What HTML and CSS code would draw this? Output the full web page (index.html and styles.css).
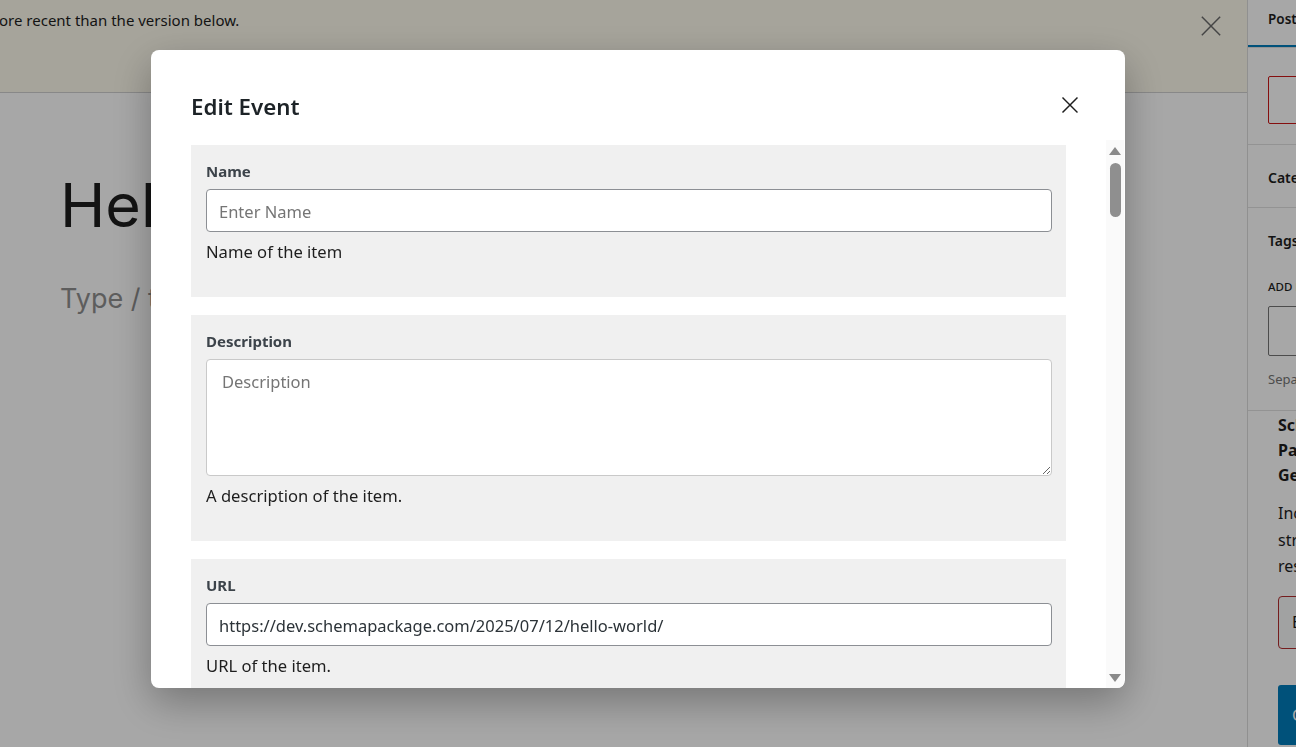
FILE: index.html
```html
<!DOCTYPE html>
<html>
<head>
	<meta charset="utf-8">
	<link rel="stylesheet" href="styles.css">
</head>
<body>
	<div class="editor">
		<div class="main">
			<div class="notice">
				<p class="notice-text">ore recent than the version below.</p>
				<svg class="notice-close" width="24" height="24" viewBox="0 0 24 24"><path d="M2 2 L22 22 M22 2 L2 22" stroke="currentColor" stroke-width="1.6" fill="none"/></svg>
			</div>
			<div class="canvas">
				<h1 class="post-title">Hello world!</h1>
				<p class="appender">Type / to choose a block</p>
			</div>
		</div>

		<aside class="sidebar">
			<div class="tabs">
				<span class="tab active">Post</span>
				<span class="tab">Block</span>
			</div>
			<div class="panel first">
				<button class="trash">Move to trash</button>
			</div>
			<div class="panel">
				<h2 class="panel-title">Categories</h2>
			</div>
			<div class="panel tags">
				<h2 class="panel-title">Tags</h2>
				<div class="small-label">Add new tag</div>
				<div class="tag-input"></div>
				<div class="hint">Separate with commas or the Enter key.</div>
			</div>
			<div class="plugin">
				<h3 class="plugin-title">Schema<br>Package<br>General</h3>
				<p class="plugin-text">Include<br>structured data in<br>results.</p>
				<button class="outline-btn">Edit Schema</button>
				<button class="blue-btn">Generate</button>
			</div>
		</aside>
	</div>

	<div class="overlay">
		<div class="modal">
			<div class="modal-head">
				<h2 class="modal-title">Edit Event</h2>
				<svg class="modal-close" width="24" height="24" viewBox="0 0 24 24"><path d="M3 3 L21 21 M21 3 L3 21" stroke="currentColor" stroke-width="1.7" fill="none"/></svg>
			</div>
			<div class="modal-body">
				<div class="fields">
					<div class="field">
						<label class="field-label">Name</label>
						<input class="field-input" type="text" placeholder="Enter Name">
						<div class="field-help">Name of the item</div>
					</div>
					<div class="field">
						<label class="field-label">Description</label>
						<textarea class="field-area" placeholder="Description"></textarea>
						<div class="field-help">A description of the item.</div>
					</div>
					<div class="field">
						<label class="field-label">URL</label>
						<input class="field-input" type="text" value="https://dev.schemapackage.com/2025/07/12/hello-world/">
						<div class="field-help">URL of the item.</div>
					</div>
				</div>
				<div class="scrollbar">
					<div class="arrow up"></div>
					<div class="thumb"></div>
					<div class="track-rest"></div>
					<div class="arrow down"></div>
				</div>
			</div>
		</div>
	</div>
</body>
</html>
```

FILE: styles.css
```css
html, body {
	margin: 0;
	height: 100%;
	overflow: hidden;
}

body {
	font-family: "Noto Sans", "Open Sans", sans-serif;
	color: #1e1e1e;
	background: #fff;
}

.editor {
	display: flex;
	width: 1527px;
	height: 747px;
}

.main {
	flex: 0 0 1247px;
	display: flex;
	flex-direction: column;
	overflow: hidden;
}

/* notice on top of the editor */
.notice {
	height: 93px;
	background: #fdfaed;
	border-bottom: 1px solid #d0d0d0;
	display: flex;
	justify-content: space-between;
	align-items: flex-start;
	box-sizing: border-box;
}

.notice-text {
	margin: 10px 0 0 -1px;
	font-size: 15px;
	line-height: 20px;
}

.notice-close {
	width: 22px;
	height: 22px;
	margin: 15px 25px 0 0;
	color: #6a6a6a;
}

.canvas {
	padding: 0 60px;
}

.post-title {
	margin: 72px 0 0;
	font-family: Inter, "Liberation Sans", sans-serif;
	font-weight: 400;
	font-size: 61px;
	line-height: 80px;
	white-space: nowrap;
}

.appender {
	margin: 37px 0 0;
	font-family: Inter, "Liberation Sans", sans-serif;
	font-size: 27px;
	color: #8f8f8f;
	white-space: nowrap;
}

/* settings sidebar */
.sidebar {
	flex: 0 0 280px;
	border-left: 1px solid #dcdcdc;
	font-size: 13px;
	white-space: nowrap;
}

.tabs {
	height: 48px;
	border-bottom: 1px solid #e0e0e0;
	box-sizing: border-box;
	display: flex;
}

.tab {
	padding: 0 20px;
	line-height: 38px;
	font-weight: 600;
	font-size: 13.5px;
}

.tab.active {
	box-shadow: inset 0 -2px 0 #007cba;
}

.panel {
	border-bottom: 1px solid #e0e0e0;
	padding: 0 20px;
}

.panel.first {
	height: 97px;
	padding-top: 28px;
	box-sizing: border-box;
}

.trash {
	height: 48px;
	width: 220px;
	background: #fff;
	border: 1px solid #cc1818;
	border-radius: 2px;
	color: #cc1818;
	font: inherit;
}

.panel-title {
	margin: 0;
	padding-top: 3px;
	font-size: 14px;
	font-weight: 600;
	line-height: 59px;
}

.tags {
	height: 203px;
	box-sizing: border-box;
}

.tags .panel-title {
	padding-top: 1px;
	line-height: 64px;
}

.small-label {
	font-size: 11.5px;
	font-weight: 500;
	text-transform: uppercase;
	margin-top: 6px;
}

.tag-input {
	height: 50px;
	border: 1px solid #757575;
	border-radius: 2px;
	margin-top: 12px;
	box-sizing: border-box;
}

.hint {
	margin-top: 14px;
	color: #757575;
}

.plugin {
	padding: 2px 20px 0 30px;
}

.plugin-title {
	margin: 0;
	font-size: 16px;
	font-weight: 700;
	line-height: 25px;
}

.plugin-text {
	margin: 12px 0 0;
	font-size: 16px;
	line-height: 26.5px;
}

.outline-btn {
	display: block;
	margin-top: 16px;
	height: 53px;
	padding: 0 13px;
	background: #f6f7f7;
	border: 1px solid #b32d2e;
	border-radius: 4px;
	font: 16px "Noto Sans", sans-serif;
	color: #1e1e1e;
}

.blue-btn {
	display: block;
	margin-top: 36px;
	height: 60px;
	width: 200px;
	padding: 0 14px;
	background: #007cba;
	border: 0;
	border-radius: 3px;
	font: 16px "Noto Sans", sans-serif;
	color: #fff;
	text-align: left;
}

/* modal */
.overlay {
	position: fixed;
	inset: 0;
	background: rgba(0, 0, 0, 0.345);
	padding: 50px 0 0 151px;
}

.modal {
	width: 974px;
	height: 638px;
	background: #fff;
	border-radius: 8px;
	box-shadow: 0 14px 40px rgba(0, 0, 0, 0.3);
	display: flex;
	flex-direction: column;
	overflow: hidden;
}

.modal-head {
	height: 90px;
	flex: 0 0 90px;
	box-sizing: border-box;
	padding: 0 45px 0 40px;
	display: flex;
	justify-content: space-between;
	align-items: flex-start;
}

.modal-title {
	margin: 42px 0 0;
	font-size: 22.3px;
	font-weight: 600;
	line-height: 30px;
	color: #1d2327;
}

.modal-close {
	width: 20px;
	height: 20px;
	margin-top: 45px;
	color: #1e1e1e;
}

.modal-body {
	flex: 1;
	display: flex;
	min-height: 0;
}

.fields {
	flex: 1;
	padding: 5px 40px 0;
	overflow: hidden;
}

.field {
	background: #f0f0f0;
	padding: 16px 14px 33px 15px;
	margin-bottom: 18px;
}

.field + .field + .field {
	margin-top: 1px;
}

.field-label {
	display: block;
	font-size: 15px;
	font-weight: 700;
	line-height: 20px;
	color: #3c434a;
	margin-bottom: 8px;
}

.field-input,
.field-area {
	display: block;
	width: 100%;
	box-sizing: border-box;
	font-family: "Noto Sans", "Open Sans", sans-serif;
	font-size: 16.5px;
	color: #2c3338;
	background: #fff;
	border-radius: 4px;
	margin: 0;
}

.field-input {
	height: 43px;
	border: 1px solid #8c8f94;
	padding: 1px 12px 0;
}

.field-area {
	height: 117px;
	border: 1px solid #c9c9c9;
	padding: 10px 15px;
	resize: vertical;
}

.field-input::placeholder,
.field-area::placeholder {
	color: #757575;
}

.field-help {
	margin-top: 8px;
	font-size: 16.6px;
	line-height: 24px;
	color: #1e1e1e;
}

/* fake scroll bar of the modal body */
.scrollbar {
	flex: 0 0 18px;
	margin-right: 1px;
	background: #fafafa;
	display: flex;
	flex-direction: column;
	align-items: center;
}

.arrow {
	width: 0;
	height: 0;
	border-left: 6px solid transparent;
	border-right: 6px solid transparent;
}

.arrow.up {
	margin-top: 7px;
	border-bottom: 8px solid #8a8a8a;
}

.arrow.down {
	margin-bottom: 6px;
	border-top: 8px solid #8a8a8a;
}

.thumb {
	margin-top: 8px;
	width: 11px;
	height: 54px;
	border-radius: 6px;
	background: #8f8f8f;
}

.track-rest {
	flex: 1;
}
```
